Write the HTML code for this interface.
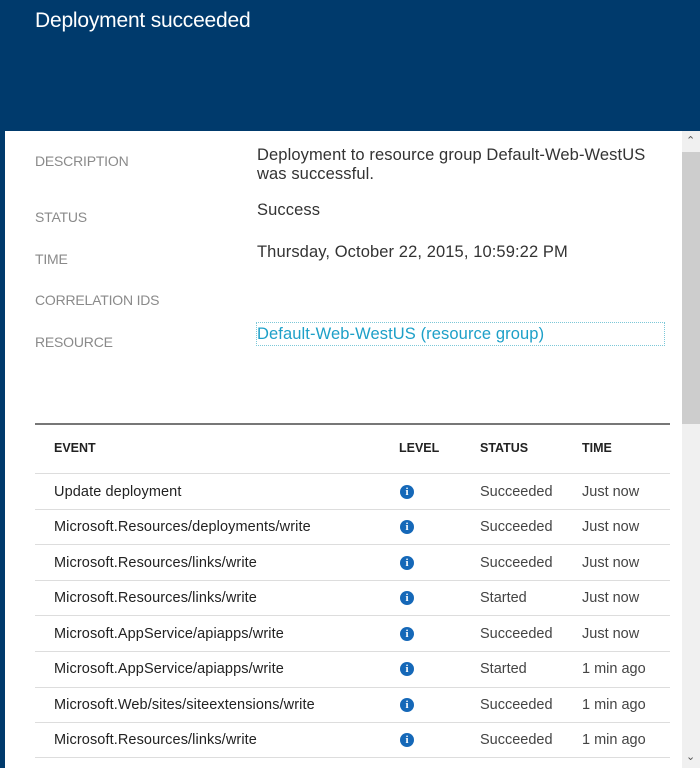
<!DOCTYPE html>
<html><head><style>
body{margin:0;width:700px;height:768px;overflow:hidden;background:#fff;font-family:"Liberation Sans",sans-serif;position:relative}
.a{position:absolute;white-space:nowrap}
.hdr{left:0;top:0;width:700px;height:131px;background:#003a6c}
.strip{left:0;top:131px;width:5px;height:637px;background:#003a6c}
.lbl{left:35px;font-size:14px;color:#8a8a8a;letter-spacing:-0.2px}
.val{left:257px;font-size:16.5px;color:#333;letter-spacing:0.1px}
.th{font-size:12.5px;font-weight:bold;color:#222;top:441px}
.ev{left:54px;font-size:14.5px;color:#222;letter-spacing:0.1px}
.st{left:480px;font-size:14.5px;color:#444}
.tm{left:582px;font-size:14.5px;color:#444}
.ln{left:35px;width:635px;height:1px;background:#ddd}
.ic{left:400px;width:14px;height:14px;border-radius:50%;background:#1568b8;color:#fff;font-size:11px;font-weight:bold;text-align:center;line-height:14px;font-family:"Liberation Serif",serif}
</style></head><body>
<div class="a hdr"></div>
<div class="a" style="left:35px;top:9px;font-size:21px;color:#fff;letter-spacing:-0.2px">Deployment succeeded</div>
<div class="a strip"></div>
<div class="a" style="left:682px;top:131px;width:18px;height:637px;background:#f0f0f0"></div>
<div class="a" style="left:682px;top:152px;width:18px;height:272px;background:#cdcdcd"></div>
<div class="a" style="left:686px;top:134px;font-size:11px;color:#555">&#8963;</div>
<div class="a" style="left:686px;top:750px;font-size:11px;color:#555">&#8964;</div>

<div class="a lbl" style="top:153px">DESCRIPTION</div>
<div class="a val" style="top:146px;line-height:19px">Deployment to resource group Default-Web-WestUS<br>was successful.</div>
<div class="a lbl" style="top:209px">STATUS</div>
<div class="a val" style="top:201px">Success</div>
<div class="a lbl" style="top:251px">TIME</div>
<div class="a val" style="top:243px">Thursday, October 22, 2015, 10:59:22 PM</div>
<div class="a lbl" style="top:292px">CORRELATION IDS</div>
<div class="a lbl" style="top:334px">RESOURCE</div>
<div class="a" style="left:256px;top:322px;width:407px;height:22px;border:1px dotted #7cc8d8"></div>
<div class="a val" style="top:325px;color:#1ea0c8">Default-Web-WestUS (resource group)</div>

<div class="a" style="left:35px;top:423px;width:635px;height:2px;background:#777"></div>
<div class="a th" style="left:54px">EVENT</div>
<div class="a th" style="left:399px">LEVEL</div>
<div class="a th" style="left:480px">STATUS</div>
<div class="a th" style="left:582px">TIME</div>

<div class="a ln" style="top:473px"></div>
<div class="a ev" style="top:484px">Update deployment</div><div class="a ic" style="top:485px">i</div><div class="a st" style="top:484px">Succeeded</div><div class="a tm" style="top:484px">Just now</div>
<div class="a ln" style="top:509px"></div>
<div class="a ev" style="top:519px">Microsoft.Resources/deployments/write</div><div class="a ic" style="top:520px">i</div><div class="a st" style="top:519px">Succeeded</div><div class="a tm" style="top:519px">Just now</div>
<div class="a ln" style="top:544px"></div>
<div class="a ev" style="top:555px">Microsoft.Resources/links/write</div><div class="a ic" style="top:556px">i</div><div class="a st" style="top:555px">Succeeded</div><div class="a tm" style="top:555px">Just now</div>
<div class="a ln" style="top:580px"></div>
<div class="a ev" style="top:590px">Microsoft.Resources/links/write</div><div class="a ic" style="top:591px">i</div><div class="a st" style="top:590px">Started</div><div class="a tm" style="top:590px">Just now</div>
<div class="a ln" style="top:615px"></div>
<div class="a ev" style="top:626px">Microsoft.AppService/apiapps/write</div><div class="a ic" style="top:627px">i</div><div class="a st" style="top:626px">Succeeded</div><div class="a tm" style="top:626px">Just now</div>
<div class="a ln" style="top:651px"></div>
<div class="a ev" style="top:661px">Microsoft.AppService/apiapps/write</div><div class="a ic" style="top:662px">i</div><div class="a st" style="top:661px">Started</div><div class="a tm" style="top:661px">1 min ago</div>
<div class="a ln" style="top:687px"></div>
<div class="a ev" style="top:697px">Microsoft.Web/sites/siteextensions/write</div><div class="a ic" style="top:698px">i</div><div class="a st" style="top:697px">Succeeded</div><div class="a tm" style="top:697px">1 min ago</div>
<div class="a ln" style="top:722px"></div>
<div class="a ev" style="top:732px">Microsoft.Resources/links/write</div><div class="a ic" style="top:733px">i</div><div class="a st" style="top:732px">Succeeded</div><div class="a tm" style="top:732px">1 min ago</div>
<div class="a ln" style="top:757px"></div>
</body></html>
